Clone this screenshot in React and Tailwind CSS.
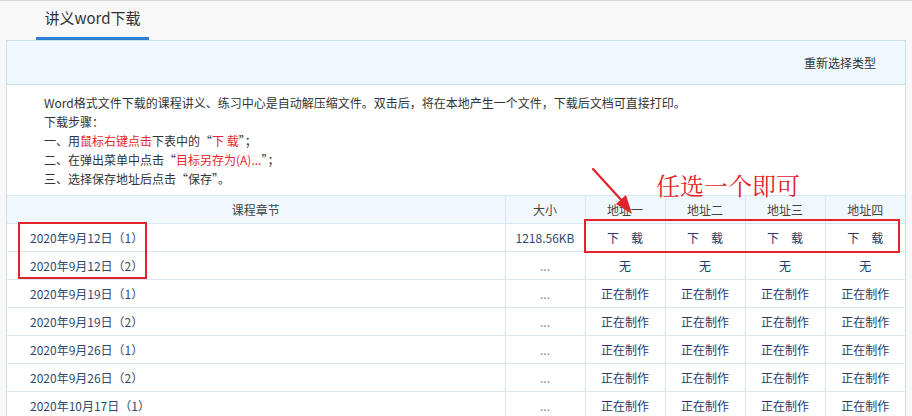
import React from 'react';

const rows = [
    { name: '2020年9月12日（1）', size: '1218.56KB', links: ['下　载', '下　载', '下　载', '下　载'] },
    { name: '2020年9月12日（2）', size: '...', links: ['无', '无', '无', '无'] },
    { name: '2020年9月19日（1）', size: '...', links: ['正在制作', '正在制作', '正在制作', '正在制作'] },
    { name: '2020年9月19日（2）', size: '...', links: ['正在制作', '正在制作', '正在制作', '正在制作'] },
    { name: '2020年9月26日（1）', size: '...', links: ['正在制作', '正在制作', '正在制作', '正在制作'] },
    { name: '2020年9月26日（2）', size: '...', links: ['正在制作', '正在制作', '正在制作', '正在制作'] },
    { name: '2020年10月17日（1）', size: '...', links: ['正在制作', '正在制作', '正在制作', '正在制作'] },
];

const cell = 'h-[28px] border-t border-l border-[#d8e7f3] text-center p-0';

const App = () => {
    return (
        <div
            className="relative min-h-screen bg-[#f8f8f8] border-t border-[#d6d6d6] text-[12px] text-[#333]"
            style={{ fontFamily: '"Noto Sans CJK SC", "Noto Sans", sans-serif' }}
        >
            {/* Tab bar */}
            <div className="h-[39px] flex items-end pl-[36px]">
                <div className="h-[39px] w-[113px] border-b-[3px] border-[#2b7fd6] flex items-center justify-center text-[15px] text-[#333] pb-[1px]">
                    讲义word下载
                </div>
            </div>

            <div className="px-[6px]">
                <div className="w-[900px] border border-[#c9e0ee] bg-white">
                    {/* Header band */}
                    <div className="h-[44px] bg-[#eef8fe] border-b border-[#c9e0ee] flex items-center justify-end pr-[29px]">
                        <span>重新选择类型</span>
                    </div>

                    {/* Instructions */}
                    <div className="pl-[37px] pt-[8px] pb-[7px] leading-[19px]">
                        <p>Word格式文件下载的课程讲义、练习中心是自动解压缩文件。双击后，将在本地产生一个文件，下载后文档可直接打印。</p>
                        <p>下载步骤：</p>
                        <p>一、用<span className="text-[#e3262a]">鼠标右键点击</span>下表中的“<span className="text-[#e3262a]">下 载</span>”；</p>
                        <p>二、在弹出菜单中点击“<span className="text-[#e3262a]">目标另存为(A)...</span>”；</p>
                        <p>三、选择保存地址后点击“保存”。</p>
                    </div>

                    {/* Table */}
                    <table className="w-full table-fixed border-collapse">
                        <colgroup>
                            <col className="w-[498px]" />
                            <col className="w-[80px]" />
                            <col className="w-[80px]" />
                            <col className="w-[80px]" />
                            <col className="w-[80px]" />
                            <col className="w-[80px]" />
                        </colgroup>
                        <thead>
                            <tr className="bg-[#f1f8fd] text-[#444]">
                                <th className={`${cell} font-normal border-l-0`}>课程章节</th>
                                <th className={`${cell} font-normal`}>大小</th>
                                <th className={`${cell} font-normal`}>地址一</th>
                                <th className={`${cell} font-normal`}>地址二</th>
                                <th className={`${cell} font-normal`}>地址三</th>
                                <th className={`${cell} font-normal`}>地址四</th>
                            </tr>
                        </thead>
                        <tbody>
                            {rows.map((row) => (
                                <tr key={row.name}>
                                    <td className={`${cell} border-l-0 text-left pl-[23px] text-[#2e4a6e]`}>{row.name}</td>
                                    <td className={`${cell} ${row.size === '...' ? 'text-[#888]' : 'text-[#2e4a6e]'}`}>{row.size}</td>
                                    {row.links.map((l, i) => (
                                        <td key={i} className={`${cell} text-[#1f3c68]`}>{l}</td>
                                    ))}
                                </tr>
                            ))}
                        </tbody>
                    </table>
                </div>
            </div>

            {/* Annotations drawn over the screenshot */}
            <div className="absolute left-[18px] top-[221px] w-[129px] h-[57px] border-2 border-[#e0242a]" />
            <div className="absolute left-[584px] top-[218px] w-[316px] h-[34px] border-2 border-[#e0242a]" />
            <svg className="absolute left-[588px] top-[163px]" width="52" height="56" viewBox="0 0 52 56">
                <line x1="5" y1="5" x2="36" y2="39" stroke="#e0242a" strokeWidth="2.2" strokeLinecap="round" />
                <polygon points="44,50 28,40 38,31" fill="#e0242a" />
            </svg>
            <div
                className="absolute left-[656px] top-[169px] text-[24px] leading-[30px] text-[#e0242a]"
                style={{ fontFamily: '"Noto Serif CJK SC", "Noto Sans CJK SC", serif' }}
            >
                任选一个即可
            </div>
        </div>
    );
};

export default App;
